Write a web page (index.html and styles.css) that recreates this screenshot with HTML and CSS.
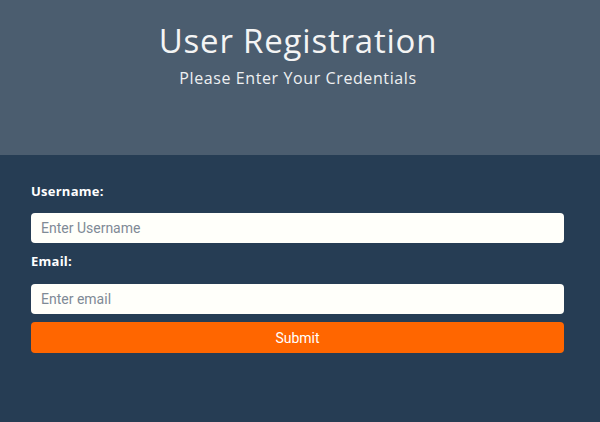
FILE: index.html
```html
<!DOCTYPE html>
<html>
<head>
<meta charset="utf-8">
<link rel="stylesheet" href="styles.css">
</head>
<body>
<header class="hero">
  <h1 class="title">User Registration</h1>
  <p class="subtitle">Please Enter Your Credentials</p>
</header>
<main class="panel">
  <form class="form">
    <label class="label" for="u">Username:</label>
    <input class="field" id="u" type="text" placeholder="Enter Username">
    <label class="label label-email" for="e">Email:</label>
    <input class="field field-last" id="e" type="email" placeholder="Enter email">
    <button class="submit" type="button">Submit</button>
  </form>
</main>
</body>
</html>
```

FILE: styles.css
```css
html, body {
  margin: 0;
  padding: 0;
  height: 100%;
}
body {
  background: #263d54;
  font-family: "Open Sans", "DejaVu Sans", sans-serif;
  color: #fff;
}
.hero {
  background: #4b5d6f;
  height: 155px;
  box-sizing: border-box;
  padding: 20px 4px 0 0;
  text-align: center;
}
.title {
  margin: 0;
  font-weight: 400;
  font-size: 33px;
  line-height: 42px;
  color: #f4f4f4;
  letter-spacing: 0.8px;
}
.subtitle {
  margin: 6px 0 0;
  font-size: 16px;
  line-height: 20px;
  color: #eef0f2;
  letter-spacing: 0.6px;
}
.panel {
  padding: 27px 36px 0 31px;
}
.form {
  display: flex;
  flex-direction: column;
}
.label {
  font-weight: 700;
  font-size: 13px;
  line-height: 18px;
  margin-bottom: 13px;
  letter-spacing: 0.25px;
}
.label-email {
  margin-bottom: 14px;
}
.field {
  height: 30px;
  box-sizing: border-box;
  border: none;
  border-radius: 4px;
  background: #fffffa;
  padding: 0 10px;
  font-family: Roboto, sans-serif;
  font-size: 14px;
  color: #333;
  margin-bottom: 9px;
}
.field::placeholder {
  color: #7f8a96;
}
.field-last {
  margin-bottom: 8px;
}
.submit {
  height: 31px;
  border: none;
  border-radius: 4px;
  background: #ff6600;
  color: #fff;
  font-family: Roboto, sans-serif;
  font-size: 14px;
}
```
